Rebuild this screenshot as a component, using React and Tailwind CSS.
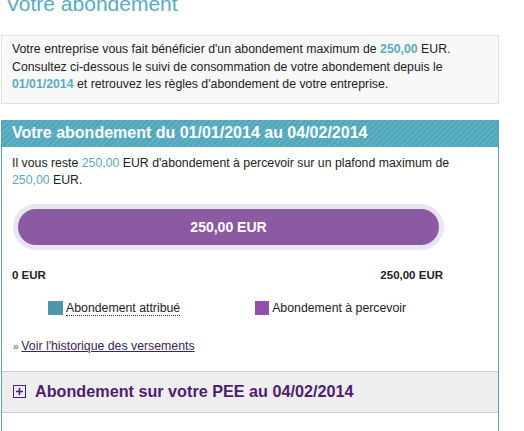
export default function App() {
  return (
    <div className="w-[524px] h-[431px] overflow-hidden bg-white font-['Liberation_Sans',Arial,sans-serif] text-[12.3px] text-[#222]">
      <h1 className="-mt-[9px] pl-[6px] text-[21px] leading-[25px] text-[#5aabc0]">Votre abondement</h1>

      <div className="ml-[1px] mt-[19px] w-[498px] border border-[#e2e2e2] bg-[#f8f8f8] px-[10px] pt-[5px] pb-[9px] leading-[17.5px]">
        Votre entreprise vous fait bénéficier d'un abondement maximum de{' '}
        <span className="font-bold text-[#5aabc0]">250,00</span> EUR.
        <br />
        Consultez ci-dessous le suivi de consommation de votre abondement depuis le
        <br />
        <span className="font-bold text-[#5aabc0]">01/01/2014</span> et retrouvez les règles d'abondement de votre entreprise.
      </div>

      <div className="ml-[1px] mt-[16px] w-[498px] border-x border-[#5a9fb2]">
        <div className="h-[27px] bg-[repeating-linear-gradient(135deg,#5db1c3_0px,#5db1c3_2px,#51a6b9_2px,#51a6b9_4px)] pl-[10px] text-[16px] font-bold leading-[26px] text-white">
          Votre abondement du 01/01/2014 au 04/02/2014
        </div>

        <div className="px-[10px] pt-[8px] leading-[17.5px]">
          Il vous reste <span className="text-[#5aabc0]">250,00</span> EUR d'abondement à percevoir sur un plafond maximum de
          <br />
          <span className="text-[#5aabc0]">250,00</span> EUR.
        </div>

        <div className="ml-[11px] mt-[14px] w-[431px] rounded-full bg-[#e8e6f1] p-[5px]">
          <div className="h-[36px] rounded-full bg-[#8b5aa3] text-center text-[14px] font-bold leading-[36px] text-white">
            250,00 EUR
          </div>
        </div>

        <div className="ml-[10px] mt-[18px] flex w-[431px] justify-between text-[11.5px] font-bold leading-[14px]">
          <span>0 EUR</span>
          <span>250,00 EUR</span>
        </div>

        <div className="mt-[19px] flex items-center leading-[14px]">
          <span className="ml-[46px] h-[14px] w-[15px] bg-[#4e95ab]"></span>
          <span className="ml-[3px] border-b border-dotted border-[#333]">Abondement attribué</span>
          <span className="ml-[75px] h-[14px] w-[14px] bg-[#9050aa]"></span>
          <span className="ml-[3px]">Abondement à percevoir</span>
        </div>

        <div className="mt-[23px] pl-[11px] leading-[15px]">
          <span className="text-[10px] text-[#555]">» </span>
          <a href="#" className="text-[#3b2556] underline">Voir l'historique des versements</a>
        </div>

        <div className="mt-[17px] flex h-[42px] items-center border-y border-[#cccccc] bg-[#eeeeee] pl-[11px]">
          <span className="flex h-[13px] w-[13px] items-center justify-center border border-[#4f1f6f]">
            <svg width="9" height="9" viewBox="0 0 9 9">
              <path d="M4.5 1v7M1 4.5h7" stroke="#4f1f6f" strokeWidth="1.6" />
            </svg>
          </span>
          <span className="ml-[9px] text-[16.2px] font-bold text-[#4f1f6f]">Abondement sur votre PEE au 04/02/2014</span>
        </div>
        <div className="h-[40px]"></div>
      </div>
    </div>
  );
}
